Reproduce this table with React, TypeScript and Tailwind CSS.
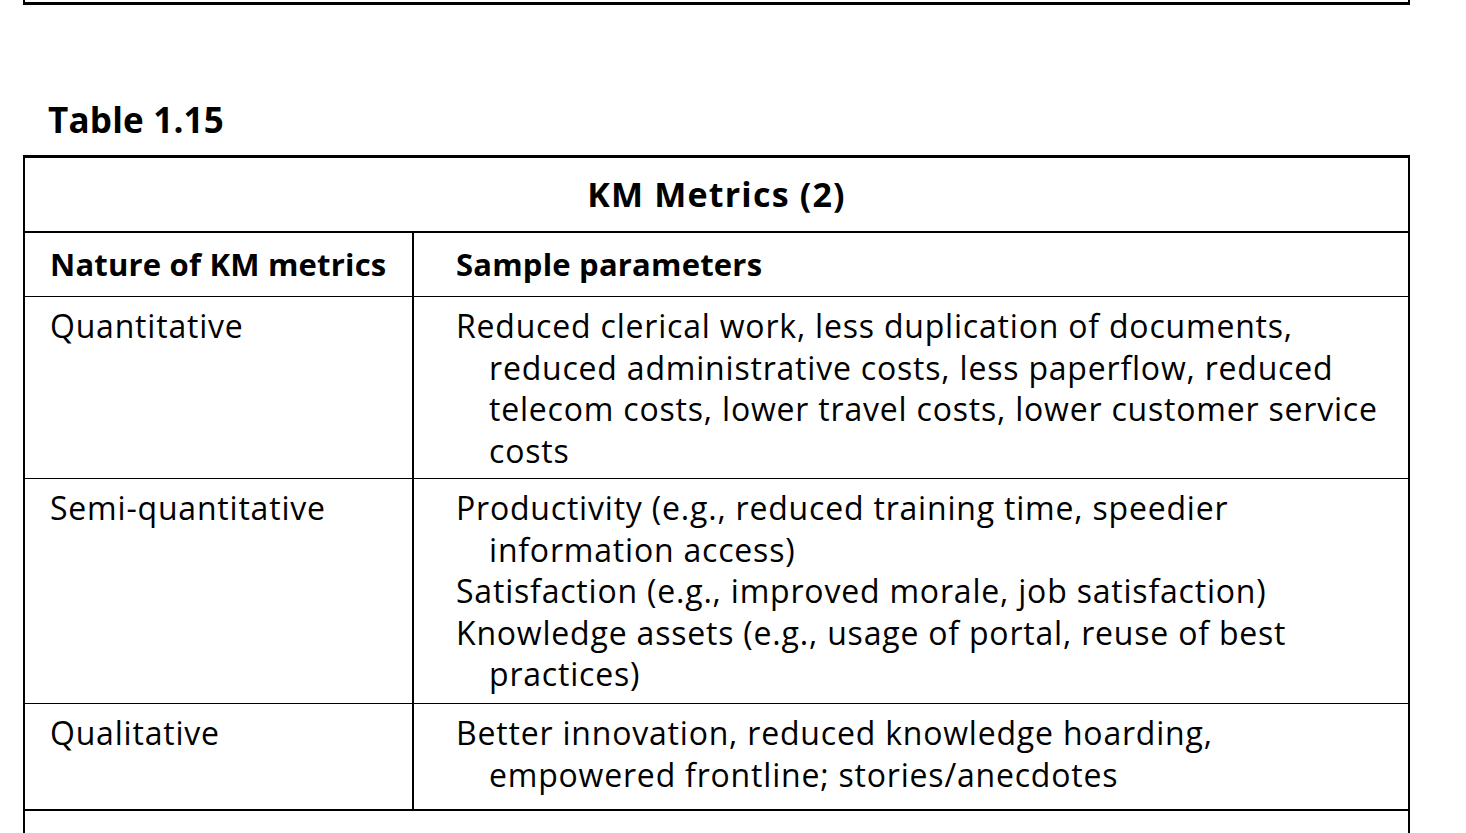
import React from "react";

const body = "text-[32px] leading-[41.5px] tracking-[0.8px]";

function Item({ lines }: { lines: string[] }) {
  return (
    <div>
      {lines.map((l, i) => (
        <div key={i} className={i === 0 ? "whitespace-nowrap" : "whitespace-nowrap pl-[33px]"}>
          {l}
        </div>
      ))}
    </div>
  );
}

export default function App() {
  return (
    <div
      className="w-[1466px] h-[833px] overflow-hidden bg-white text-black"
      style={{ fontFamily: '"Open Sans", "Noto Sans", sans-serif' }}
    >
      <div className="ml-[23px] w-[1387px] h-[5px] border-x-2 border-b-[3px] border-black" />
      <div className="pl-[48px] pt-[92px] h-[150px] text-[35px] font-bold leading-[46px] tracking-[0.2px]">Table 1.15</div>
      <div className="ml-[23px] w-[1387px] border-x-2 border-t-[3px] border-black">
        <div className="h-[75px] flex items-center justify-center text-[34px] tracking-[1.2px] font-bold border-b-[2px] border-black">
          KM Metrics (2)
        </div>
        <div className={`grid grid-cols-[389px_1fr] ${body}`}>
          <div className="font-bold text-[31px] tracking-[0.2px] h-[64px] pl-[25px] flex items-center border-r-2 border-b border-black">Nature of KM metrics</div>
          <div className="font-bold text-[31px] tracking-[0.2px] h-[64px] pl-[42px] flex items-center border-b border-black">Sample parameters</div>

          <div className="pl-[25px] pt-[8px] border-r-2 border-b border-black h-[182px]">Quantitative</div>
          <div className="pl-[42px] pt-[8px] border-b border-black h-[182px]">
            <Item
              lines={[
                "Reduced clerical work, less duplication of documents,",
                "reduced administrative costs, less paperflow, reduced",
                "telecom costs, lower travel costs, lower customer service",
                "costs",
              ]}
            />
          </div>

          <div className="pl-[25px] pt-[8px] border-r-2 border-b border-black h-[225px]">Semi-quantitative</div>
          <div className="pl-[42px] pt-[8px] border-b border-black h-[225px]">
            <Item lines={["Productivity (e.g., reduced training time, speedier", "information access)"]} />
            <Item lines={["Satisfaction (e.g., improved morale, job satisfaction)"]} />
            <Item lines={["Knowledge assets (e.g., usage of portal, reuse of best", "practices)"]} />
          </div>

          <div className="pl-[25px] pt-[8px] border-r-2 border-b-2 border-black h-[107px]">Qualitative</div>
          <div className="pl-[42px] pt-[8px] border-b-2 border-black h-[107px]">
            <Item lines={["Better innovation, reduced knowledge hoarding,", "empowered frontline; stories/anecdotes"]} />
          </div>
        </div>
        <div className="h-[60px]" />
      </div>
    </div>
  );
}
